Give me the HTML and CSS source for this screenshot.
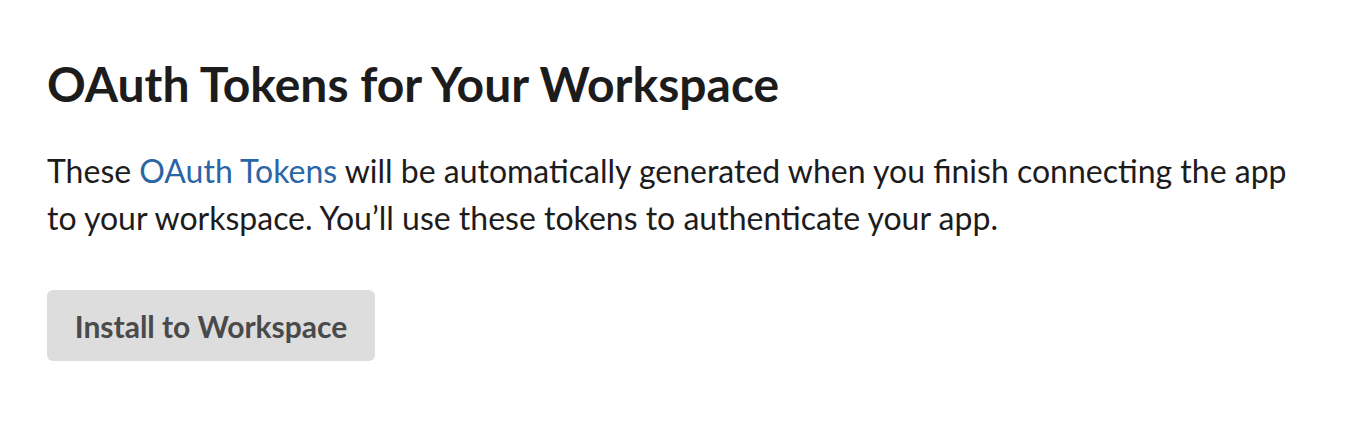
FILE: index.html
```html
<!DOCTYPE html>
<html>
<head>
<meta charset="utf-8">
<link rel="stylesheet" href="styles.css">
</head>
<body>
<main class="section">
  <h1 class="title">OAuth Tokens for Your Workspace</h1>
  <p class="desc">These <a class="link" href="#">OAuth Tokens</a> will be automatically generated when you finish connecting the app to your workspace. You’ll use these tokens to authenticate your app.</p>
  <button class="btn">Install to Workspace</button>
</main>
</body>
</html>
```
FILE: styles.css
```css
html, body {
  margin: 0;
  padding: 0;
  background: #fff;
}
.section {
  padding: 55px 47px 0 47px;
  font-family: Lato, "Noto Sans", sans-serif;
  color: #1d1c1d;
}
.title {
  margin: 0;
  font-size: 48px;
  line-height: 58px;
  font-weight: 700;
}
.desc {
  margin: 34px 0 0 0;
  font-size: 32px;
  line-height: 47px;
}
.link {
  color: #2b65a5;
  text-decoration: none;
}
.btn {
  display: block;
  margin-top: 49px;
  width: 328px;
  height: 71px;
  border: none;
  border-radius: 6px;
  background: #dddddd;
  color: #4a4a4a;
  font-family: Lato, "Noto Sans", sans-serif;
  font-size: 30px;
  line-height: 36px;
  font-weight: 700;
  padding: 0;
}
```
